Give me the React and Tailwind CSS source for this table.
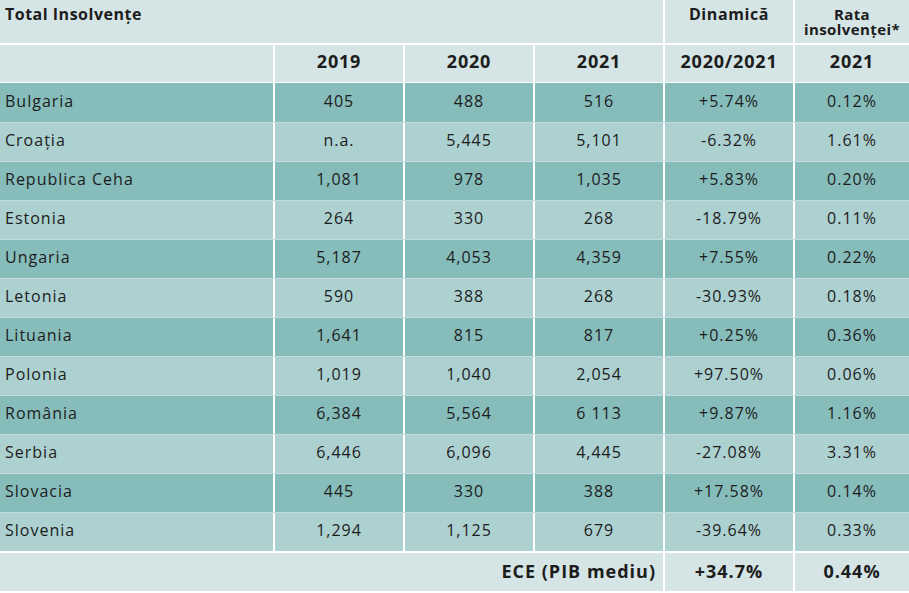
import React from "react";

const rows = [
  ["Bulgaria", "405", "488", "516", "+5.74%", "0.12%"],
  ["Croația", "n.a.", "5,445", "5,101", "-6.32%", "1.61%"],
  ["Republica Ceha", "1,081", "978", "1,035", "+5.83%", "0.20%"],
  ["Estonia", "264", "330", "268", "-18.79%", "0.11%"],
  ["Ungaria", "5,187", "4,053", "4,359", "+7.55%", "0.22%"],
  ["Letonia", "590", "388", "268", "-30.93%", "0.18%"],
  ["Lituania", "1,641", "815", "817", "+0.25%", "0.36%"],
  ["Polonia", "1,019", "1,040", "2,054", "+97.50%", "0.06%"],
  ["România", "6,384", "5,564", "6 113", "+9.87%", "1.16%"],
  ["Serbia", "6,446", "6,096", "4,445", "-27.08%", "3.31%"],
  ["Slovacia", "445", "330", "388", "+17.58%", "0.14%"],
  ["Slovenia", "1,294", "1,125", "679", "-39.64%", "0.33%"],
];

const cols = "grid grid-cols-[273px_128px_128px_128px_128px_1fr] gap-x-[2px]";

export default function App() {
  return (
    <div
      className="w-[909px] h-[593px] bg-white flex flex-col text-[#1c1c1c]"
      style={{ fontFamily: '"Open Sans", "Noto Sans", sans-serif' }}
    >
      {/* header row 1 */}
      <div className={`${cols} h-[43px]`}>
        <div className="col-span-4 bg-[#d5e4e4] pl-[5px] pt-[4px] text-[16px] font-bold leading-[20px] tracking-[0.5px]">
          Total Insolvențe
        </div>
        <div className="bg-[#d5e4e4] text-center pt-[4px] text-[16px] font-bold leading-[20px] tracking-[0.6px]">
          Dinamică
        </div>
        <div className="bg-[#d5e4e4] flex flex-col items-center pt-[7px] text-[15px] font-bold leading-[15px] tracking-[0.4px] whitespace-nowrap">
          <div>Rata</div>
          <div>insolvenței*</div>
        </div>
      </div>
      <div className="h-[2px]" />
      {/* header row 2 */}
      <div className={`${cols} h-[37px] text-[18px] font-bold tracking-[0.8px]`}>
        <div className="bg-[#d5e4e4]" />
        {["2019", "2020", "2021", "2020/2021", "2021"].map((t, i) => (
          <div key={i} className="bg-[#d5e4e4] flex items-center justify-center pb-[4px]">
            {t}
          </div>
        ))}
      </div>
      <div className="h-[1px]" />
      {rows.map((r, ri) => (
        <div
          key={ri}
          className={`${cols} h-[39px] text-[16px] tracking-[1px] ${ri === 0 ? "" : "border-t border-[#c4dcdb]"}`}
        >
          {r.map((c, ci) => (
            <div
              key={ci}
              className={`${ri % 2 === 0 ? "bg-[#86bdbb]" : "bg-[#add1d0]"} flex items-center pb-[4px] ${
                ci === 0 ? "pl-[5px]" : "justify-center"
              }`}
            >
              {c}
            </div>
          ))}
        </div>
      ))}
      <div className="h-[2px]" />
      {/* footer */}
      <div className={`${cols} h-[38px] text-[18px] font-bold tracking-[1px]`}>
        <div className="col-span-4 bg-[#d5e4e4] flex items-center justify-end pr-[7px] pb-[2px]">
          ECE (PIB mediu)
        </div>
        <div className="bg-[#d5e4e4] flex items-center justify-center pb-[2px]">+34.7%</div>
        <div className="bg-[#d5e4e4] flex items-center justify-center pb-[2px]">0.44%</div>
      </div>
    </div>
  );
}
